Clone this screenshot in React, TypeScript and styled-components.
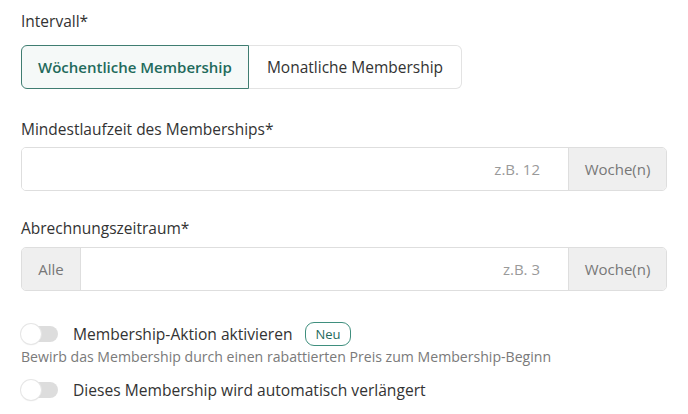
import React from 'react';
import styled, { createGlobalStyle } from 'styled-components';

const GlobalStyle = createGlobalStyle`
  body {
    margin: 0;
    background: #ffffff;
    font-family: "Open Sans", "Noto Sans", sans-serif;
    color: #333333;
  }
  * { box-sizing: border-box; }
`;

const Page = styled.div`
  width: 688px;
  height: 414px;
  padding: 11px 21px 0 21px;
  display: flex;
  flex-direction: column;
  overflow: hidden;
`;

const Field = styled.div<{ $gap: number; $mb: number }>`
  display: flex;
  flex-direction: column;
  gap: ${(p) => p.$gap}px;
  margin-bottom: ${(p) => p.$mb}px;
`;

const Label = styled.div`
  font-size: 15.5px;
  line-height: 20px;
  font-weight: 500;
  color: #333333;
`;

const Segmented = styled.div`
  display: flex;
  align-self: flex-start;
`;

const SegButton = styled.button<{ $active?: boolean; $pos: 'first' | 'last' }>`
  height: 44px;
  padding: 0 ${(p) => (p.$active ? 16 : 18)}px;
  font-family: inherit;
  font-size: ${(p) => (p.$active ? '15px' : '15.5px')};
  font-weight: ${(p) => (p.$active ? 600 : 500)};
  color: ${(p) => (p.$active ? '#1f6b5c' : '#333333')};
  background: ${(p) => (p.$active ? '#f5f9f8' : '#ffffff')};
  border: 1px solid ${(p) => (p.$active ? '#3f7d71' : '#e3e3e3')};
  border-radius: ${(p) => (p.$pos === 'first' ? '6px 0 0 6px' : '0 6px 6px 0')};
  ${(p) => (p.$pos === 'last' ? 'border-left: none;' : '')}
  cursor: pointer;
`;

const InputGroup = styled.div`
  display: flex;
  height: 44px;
  border: 1px solid #dedede;
  border-radius: 5px;
  overflow: hidden;
`;

const Addon = styled.div<{ $side: 'left' | 'right'; $width: number }>`
  width: ${(p) => p.$width}px;
  flex: none;
  display: flex;
  align-items: center;
  justify-content: center;
  background: #efefef;
  color: #777777;
  font-size: 15px;
  ${(p) => (p.$side === 'left' ? 'border-right: 1px solid #dedede;' : 'border-left: 1px solid #dedede;')}
`;

const Input = styled.input`
  flex: 1;
  min-width: 0;
  border: none;
  outline: none;
  padding: 0 28px 0 12px;
  text-align: right;
  font-family: inherit;
  font-size: 15px;
  color: #333333;
  &::placeholder {
    color: #9a9a9a;
  }
`;

const ToggleRow = styled.div`
  display: flex;
  align-items: center;
  gap: 15px;
  height: 26px;
`;

const Switch = styled.span`
  position: relative;
  width: 37px;
  height: 16px;
  border-radius: 8px;
  background: #dddddd;
  flex: none;
  &::after {
    content: '';
    position: absolute;
    left: 0;
    top: -2px;
    width: 20px;
    height: 20px;
    border-radius: 50%;
    background: #ffffff;
    box-shadow: 0 0 0 1px #e6e6e6, 0 1px 2px rgba(0, 0, 0, 0.08);
  }
`;

const ToggleText = styled.span`
  font-size: 15.6px;
  font-weight: 500;
  color: #333333;
`;

const Badge = styled.span`
  margin-left: -2px;
  padding: 2px 9px;
  border: 1px solid #3f8f7e;
  border-radius: 9px;
  color: #1f6b5c;
  font-size: 13px;
  font-weight: 500;
  line-height: 18px;
`;

const Hint = styled.div`
  font-size: 14.1px;
  line-height: 20px;
  color: #7a7a7a;
  margin-bottom: 10px;
`;

export default function App() {
  return (
    <>
      <GlobalStyle />
      <Page>
        <Field $gap={14} $mb={30}>
          <Label>Intervall*</Label>
          <Segmented>
            <SegButton $active $pos="first">Wöchentliche Membership</SegButton>
            <SegButton $pos="last">Monatliche Membership</SegButton>
          </Segmented>
        </Field>
        <Field $gap={8} $mb={27}>
          <Label>Mindestlaufzeit des Memberships*</Label>
          <InputGroup>
            <Input placeholder="z.B. 12" />
            <Addon $side="right" $width={98}>Woche(n)</Addon>
          </InputGroup>
        </Field>
        <Field $gap={9} $mb={30}>
          <Label>Abrechnungszeitraum*</Label>
          <InputGroup>
            <Addon $side="left" $width={59}>Alle</Addon>
            <Input placeholder="z.B. 3" />
            <Addon $side="right" $width={98}>Woche(n)</Addon>
          </InputGroup>
        </Field>
        <ToggleRow>
          <Switch />
          <ToggleText>Membership-Aktion aktivieren</ToggleText>
          <Badge>Neu</Badge>
        </ToggleRow>
        <Hint>Bewirb das Membership durch einen rabattierten Preis zum Membership-Beginn</Hint>
        <ToggleRow>
          <Switch />
          <ToggleText>Dieses Membership wird automatisch verlängert</ToggleText>
        </ToggleRow>
      </Page>
    </>
  );
}
